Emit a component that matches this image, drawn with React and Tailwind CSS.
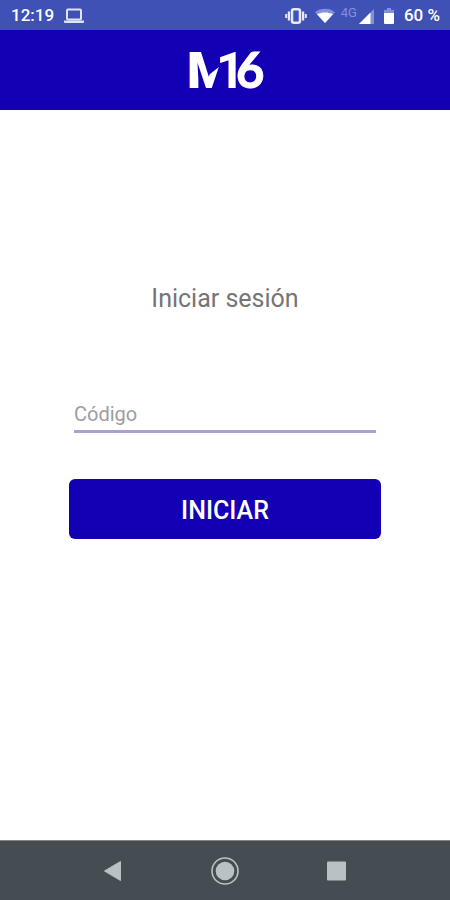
import { useState } from 'react'

function LaptopIcon() {
  return (
    <svg width="20" height="16" viewBox="0 0 20 16" fill="none" aria-hidden="true">
      <rect x="3" y="1.5" width="14" height="10" rx="1" stroke="#dfe3f8" strokeWidth="2" />
      <path d="M0 12.5h20v1.7a1 1 0 0 1-1 .8H1a1 1 0 0 1-1-.8z" fill="#dfe3f8" />
    </svg>
  )
}

function VibrateIcon() {
  return (
    <svg width="22" height="16" viewBox="0 0 22 16" fill="none" stroke="#e6e9fb" aria-hidden="true">
      <rect x="7" y="1.3" width="8" height="13.4" rx="2" strokeWidth="2.6" />
      <path d="M3.9 3.5v9M18.1 3.5v9" strokeWidth="2.2" />
      <path d="M1.2 6v4M20.8 6v4" strokeWidth="2" />
    </svg>
  )
}

function WifiIcon() {
  return (
    <svg width="20" height="16" viewBox="0 0 20 16" aria-hidden="true">
      <path d="M10 15 0 4.2C5.6-.4 14.4-.4 20 4.2z" fill="#8391dc" />
      <path d="M10 15 2 6.2c4.6-2.4 11.4-2.4 16 0z" fill="#fff" />
    </svg>
  )
}

function SignalIcon() {
  return (
    <svg width="15" height="15" viewBox="0 0 15 15" aria-hidden="true">
      <path d="M15 0v15H0z" fill="#8391dc" />
      <path d="M11.5 3.5V15H0z" fill="#fff" />
    </svg>
  )
}

function BatteryIcon() {
  return (
    <svg width="10" height="16" viewBox="0 0 10 16" aria-hidden="true">
      <path d="M3 0h4v2h3v4H0V2h3z" fill="#8391dc" />
      <path d="M0 5h10v10a1 1 0 0 1-1 1H1a1 1 0 0 1-1-1z" fill="#fff" />
    </svg>
  )
}

// The right leg of the M is cut away so that the 1 can stand in its place
function Logo() {
  return (
    <svg width="74" height="38" viewBox="0 0 74 38" role="img" aria-label="M16" fill="#fff"
      className="overflow-visible font-['Roboto',sans-serif] text-[50px] font-black">
      <clipPath id="leg">
        <path d="M0 0h14L22 23l9-7v12l-6 10H0z" />
      </clipPath>
      <text x="-1" y="37" clipPath="url(#leg)">M</text>
      <text x="28" y="37" className="font-bold">1</text>
      <text x="48" y="37" className="font-['Lato',sans-serif] text-[49px] font-bold" stroke="#fff" strokeWidth="1">6</text>
    </svg>
  )
}

function StatusBar() {
  return (
    <div className="flex h-[30px] items-center justify-between bg-[#3f51b5] pt-0.5 pr-2.5 pl-[11px] text-[17px] font-medium text-white">
      <div className="flex items-center gap-2.5">
        <span>12:19</span>
        <LaptopIcon />
      </div>
      <div className="flex items-center">
        <VibrateIcon />
        <span className="ml-2"><WifiIcon /></span>
        <span className="ml-1.5 self-start text-[13px] leading-5 font-normal text-[#8391dc]">4G</span>
        <span className="ml-0.5"><SignalIcon /></span>
        <span className="ml-2.5"><BatteryIcon /></span>
        <span className="ml-2.5">60 %</span>
      </div>
    </div>
  )
}

function NavBar() {
  return (
    <nav className="flex h-[60px] items-center justify-center gap-[84px] border-t border-[#7f8589] bg-[#454d52]">
      <button type="button" aria-label="Atrás">
        <svg width="28" height="28" viewBox="0 0 28 28">
          <path d="M5.5 14 21.5 4.5v19z" fill="#b9c1c4" stroke="#b9c1c4" strokeLinejoin="round" />
        </svg>
      </button>
      <button type="button" aria-label="Inicio">
        <svg width="28" height="28" viewBox="0 0 28 28">
          <circle cx="14" cy="14" r="13" fill="none" stroke="#b9c1c4" strokeWidth="1.6" />
          <circle cx="14" cy="14" r="9.3" fill="#b9c1c4" />
        </svg>
      </button>
      <button type="button" aria-label="Recientes">
        <svg width="28" height="28" viewBox="0 0 28 28">
          <rect x="4" y="4.5" width="19" height="19" rx="1" fill="#b9c1c4" />
        </svg>
      </button>
    </nav>
  )
}

export default function App() {
  const [code, setCode] = useState('')

  return (
    <div className="flex min-h-screen flex-col bg-white font-['Roboto',sans-serif]">
      <StatusBar />
      <header className="flex h-20 items-center justify-center bg-[#1400b4]">
        <Logo />
      </header>

      <main className="flex-1 px-[69px] pt-[173px]">
        <h1 className="text-center text-[25px] leading-8 text-[#757575]">Iniciar sesión</h1>
        <form onSubmit={e => e.preventDefault()} className="mt-[85px]">
          <div className="px-[5px]">
            <input
              type="text"
              aria-label="Código"
              placeholder="Código"
              value={code}
              onChange={e => setCode(e.target.value)}
              className="block w-full border-b-3 border-[#a9a1d4] pb-0.5 text-xl leading-7 text-[#424242] outline-none placeholder:text-[#9e9e9e]"
            />
          </div>
          <button type="submit" className="mt-[46px] h-[60px] w-full rounded-md bg-[#1400b4] pt-1 text-[25px] font-medium text-white">
            INICIAR
          </button>
        </form>
      </main>

      <NavBar />
    </div>
  )
}
